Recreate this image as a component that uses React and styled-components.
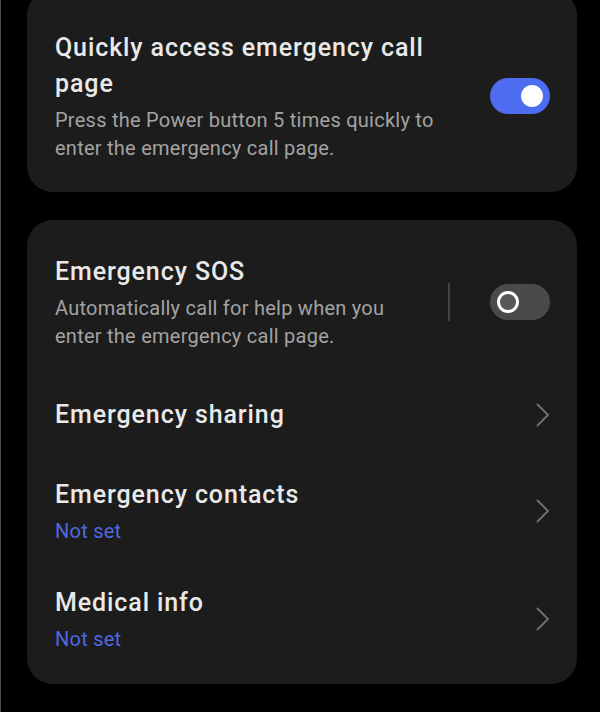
import styled, { createGlobalStyle } from 'styled-components';

const GlobalStyle = createGlobalStyle`
  html, body {
    margin: 0;
    padding: 0;
    background: #000000;
  }
  body {
    font-family: Roboto, "Noto Sans", "Liberation Sans", sans-serif;
    -webkit-font-smoothing: antialiased;
  }
`;

const Screen = styled.div`
  width: 600px;
  height: 712px;
  box-sizing: border-box;
  overflow: hidden;
  background: #000000;
  border-left: 1px solid #4a4a4a;
  padding: 0 23px 0 26px;
  display: flex;
  flex-direction: column;
  gap: 28px;
`;

const Card = styled.section`
  background: #1c1c1c;
  border-radius: 26px;
  padding: ${props => props.$pad || '34px 27px 31px 28px'};
  margin-top: ${props => props.$offset || '0'};
  display: flex;
  flex-direction: column;
  flex-shrink: 0;
  min-height: ${props => props.$minHeight || 'auto'};
  box-sizing: border-box;
`;

const Row = styled.div`
  display: flex;
  align-items: center;
  gap: 30px;
  margin-top: ${props => props.$space || 0}px;
  cursor: pointer;
`;

const TextBlock = styled.div`
  flex: 1;
  min-width: 0;
  max-width: ${props => props.$max || 'none'};
  display: flex;
  flex-direction: column;
  gap: 4px;
`;

const Title = styled.div`
  font-size: 25px;
  line-height: 36px;
  font-weight: 500;
  color: #e9e9e9;
  letter-spacing: 0.9px;
`;

const Subtitle = styled.div`
  font-size: 20px;
  line-height: 28px;
  letter-spacing: 0.25px;
  color: ${props => (props.$accent ? '#5068e0' : '#a3a3a3')};
`;

const Controls = styled.div`
  margin-left: auto;
  display: flex;
  align-items: center;
  gap: 40px;
`;

const Divider = styled.div`
  width: 2px;
  height: 38px;
  background: #434343;
`;

const Switch = styled.div`
  position: relative;
  width: 60px;
  height: 36px;
  border-radius: 18px;
  background: ${props => (props.$on ? '#4e6cf0' : '#4a4a4a')};
  flex-shrink: 0;
`;

const Knob = styled.span`
  position: absolute;
  top: 50%;
  left: ${props => (props.$on ? '31px' : '7px')};
  width: 22px;
  height: 22px;
  margin-top: -11px;
  border-radius: 50%;
  box-sizing: border-box;
  background: ${props => (props.$on ? '#ffffff' : '#585858')};
  border: ${props => (props.$on ? 'none' : '3.5px solid #ffffff')};
`;

const Chevron = styled.svg`
  width: 16px;
  height: 24px;
  margin-left: auto;
  margin-right: -1px;
  flex-shrink: 0;
`;

const ChevronIcon = () => (
  <Chevron viewBox="0 0 16 24" fill="none">
    <path d="M2.5 1.5 L13 12 L2.5 22.5" stroke="#6e6e6e" strokeWidth="2" strokeLinecap="round" strokeLinejoin="round" />
  </Chevron>
);

const Toggle = ({ on }) => (
  <Switch $on={on}>
    <Knob $on={on} />
  </Switch>
);

const App = () => {
  return (
    <>
      <GlobalStyle />
      <Screen>
        <Card $offset="-10px" $pad="40px 27px 30px 28px">
          <Row>
            <TextBlock $max="400px">
              <Title>Quickly access emergency call page</Title>
              <Subtitle>Press the Power button 5 times quickly to enter the emergency call page.</Subtitle>
            </TextBlock>
            <Controls>
              <Toggle on />
            </Controls>
          </Row>
        </Card>

        <Card>
          <Row>
            <TextBlock>
              <Title>Emergency SOS</Title>
              <Subtitle>Automatically call for help when you enter the emergency call page.</Subtitle>
            </TextBlock>
            <Controls>
              <Divider />
              <Toggle />
            </Controls>
          </Row>
          <Row $space={47}>
            <TextBlock>
              <Title>Emergency sharing</Title>
            </TextBlock>
            <ChevronIcon />
          </Row>
          <Row $space={44}>
            <TextBlock>
              <Title>Emergency contacts</Title>
              <Subtitle $accent>Not set</Subtitle>
            </TextBlock>
            <ChevronIcon />
          </Row>
          <Row $space={40}>
            <TextBlock>
              <Title>Medical info</Title>
              <Subtitle $accent>Not set</Subtitle>
            </TextBlock>
            <ChevronIcon />
          </Row>
        </Card>

        <Card $minHeight="120px" />
      </Screen>
    </>
  );
};

export default App;
